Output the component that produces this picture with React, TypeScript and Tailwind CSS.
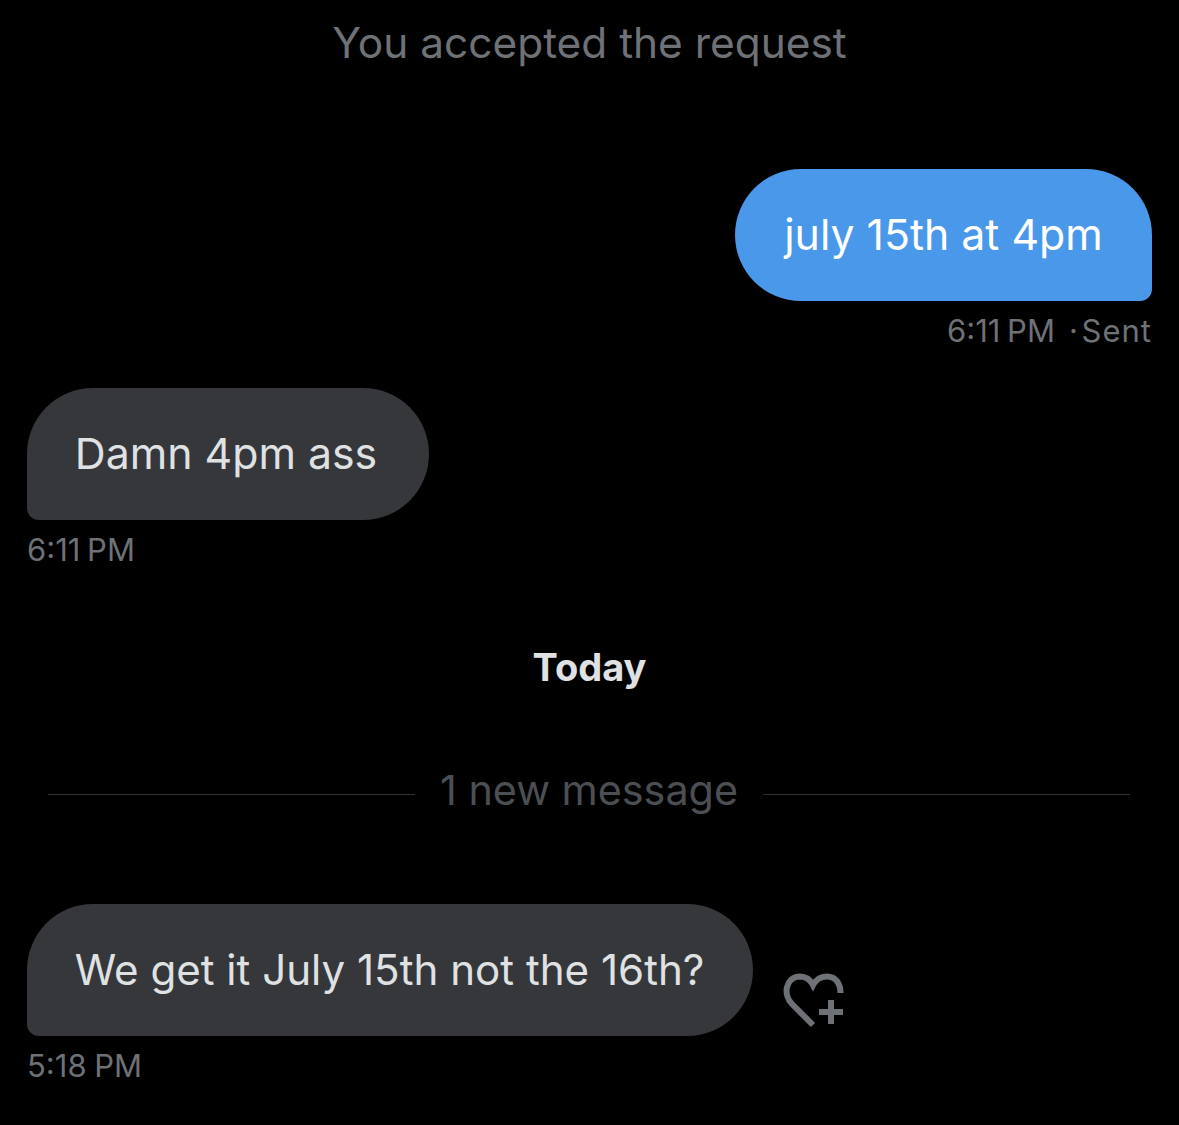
export default function App() {
  return (
    <div className="w-[1179px] h-[1125px] overflow-hidden bg-black pt-[16px] font-['Inter',sans-serif]">
      <p className="text-center text-[42.4px] leading-[54px] text-[#6e7175]">You accepted the request</p>

      <div className="mt-[99px] flex flex-col items-end pr-[27px]">
        <div className="flex h-[132px] w-[417px] items-center justify-center rounded-[66px] rounded-br-[12px] bg-[#4a98e9] text-[42.8px] text-white">
          july 15th at 4pm
        </div>
        <p className="mt-[10px] flex text-[31px] leading-[40px] text-[#6e7175]">
          <span className="[word-spacing:-2px]">6:11 PM</span>
          <span className="ml-[14px] tracking-[0.7px]">·</span>
          <span className="ml-[3px] tracking-[1px]">Sent</span>
        </p>
      </div>

      <div className="mt-[37px] flex flex-col items-start pl-[27px]">
        <div className="flex h-[132px] w-[402px] items-center justify-center rounded-[66px] rounded-bl-[12px] bg-[#36373b] pr-[4px] text-[42.8px] text-[#dfe1e3]">
          Damn 4pm ass
        </div>
        <p className="mt-[10px] text-[31px] leading-[40px] text-[#6e7175] [word-spacing:-2px]">6:11 PM</p>
      </div>

      <p className="mt-[74px] text-center text-[38px] leading-[46px] font-bold text-[#dfe1e3]">Today</p>

      <div className="mt-[73px] flex items-center pl-[48px] pr-[49px]">
        <div className="h-px flex-1 bg-[#2f3336]" />
        <p className="px-[25px] pb-[8px] text-[41.3px] leading-[54px] text-[#4b4f53]">1 new message</p>
        <div className="h-px flex-1 bg-[#2f3336]" />
      </div>

      <div className="mt-[79px] flex flex-col items-start pl-[27px]">
        <div className="flex items-end">
          <div className="flex h-[132px] w-[726px] items-center justify-center rounded-[66px] rounded-bl-[12px] bg-[#36373b] pr-[1px] text-[42.1px] text-[#dfe1e3]">
            We get it July 15th not the 16th?
          </div>
          <svg width="64" height="56" viewBox="0 0 64 56" fill="none" className="mb-[7px] ml-[29px]">
            <path
              d="M31 52 L10 31 C1 22 3 4 18 3.5 C25 3.5 29 8 31 12 C33 8 38 3.5 45 3.5 C54 3.5 58.5 11 58.5 20"
              stroke="#6e7175"
              strokeWidth="6"
            />
            <path d="M37 39H61M49 27V51" stroke="#6e7175" strokeWidth="6" />
          </svg>
        </div>
        <p className="mt-[10px] text-[31px] leading-[40px] text-[#6e7175] [word-spacing:-1px]">5:18 PM</p>
      </div>
    </div>
  );
}
